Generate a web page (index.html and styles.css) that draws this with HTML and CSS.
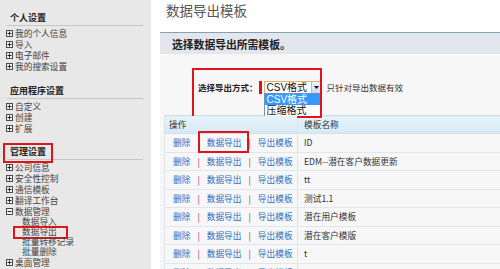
FILE: index.html
```html
<!DOCTYPE html>
<html lang="zh-CN">
<head>
<meta charset="utf-8">
<title>数据导出模板</title>
<link rel="stylesheet" href="styles.css">
</head>
<body>
<aside class="sidebar">
  <section class="nav-section">
    <h3 class="nav-title">个人设置</h3>
    <ul class="nav-list">
      <li class="nav-item"><svg class="ico" viewBox="0 0 7 7"><rect x=".5" y=".5" width="6" height="6" fill="#f4f4f4" stroke="#4a4a4a"/><path d="M1.5 3.5h4M3.5 1.5v4" stroke="#222"/></svg>我的个人信息</li>
      <li class="nav-item"><svg class="ico" viewBox="0 0 7 7"><rect x=".5" y=".5" width="6" height="6" fill="#f4f4f4" stroke="#4a4a4a"/><path d="M1.5 3.5h4M3.5 1.5v4" stroke="#222"/></svg>导入</li>
      <li class="nav-item"><svg class="ico" viewBox="0 0 7 7"><rect x=".5" y=".5" width="6" height="6" fill="#f4f4f4" stroke="#4a4a4a"/><path d="M1.5 3.5h4M3.5 1.5v4" stroke="#222"/></svg>电子邮件</li>
      <li class="nav-item"><svg class="ico" viewBox="0 0 7 7"><rect x=".5" y=".5" width="6" height="6" fill="#f4f4f4" stroke="#4a4a4a"/><path d="M1.5 3.5h4M3.5 1.5v4" stroke="#222"/></svg>我的搜索设置</li>
    </ul>
  </section>
  <section class="nav-section">
    <h3 class="nav-title">应用程序设置</h3>
    <ul class="nav-list">
      <li class="nav-item"><svg class="ico" viewBox="0 0 7 7"><rect x=".5" y=".5" width="6" height="6" fill="#f4f4f4" stroke="#4a4a4a"/><path d="M1.5 3.5h4M3.5 1.5v4" stroke="#222"/></svg>自定义</li>
      <li class="nav-item"><svg class="ico" viewBox="0 0 7 7"><rect x=".5" y=".5" width="6" height="6" fill="#f4f4f4" stroke="#4a4a4a"/><path d="M1.5 3.5h4M3.5 1.5v4" stroke="#222"/></svg>创建</li>
      <li class="nav-item"><svg class="ico" viewBox="0 0 7 7"><rect x=".5" y=".5" width="6" height="6" fill="#f4f4f4" stroke="#4a4a4a"/><path d="M1.5 3.5h4M3.5 1.5v4" stroke="#222"/></svg>扩展</li>
    </ul>
  </section>
  <section class="nav-section">
    <h3 class="nav-title">管理设置<span class="annot annot-admin"></span></h3>
    <ul class="nav-list">
      <li class="nav-item"><svg class="ico" viewBox="0 0 7 7"><rect x=".5" y=".5" width="6" height="6" fill="#f4f4f4" stroke="#4a4a4a"/><path d="M1.5 3.5h4M3.5 1.5v4" stroke="#222"/></svg>公司信息</li>
      <li class="nav-item"><svg class="ico" viewBox="0 0 7 7"><rect x=".5" y=".5" width="6" height="6" fill="#f4f4f4" stroke="#4a4a4a"/><path d="M1.5 3.5h4M3.5 1.5v4" stroke="#222"/></svg>安全性控制</li>
      <li class="nav-item"><svg class="ico" viewBox="0 0 7 7"><rect x=".5" y=".5" width="6" height="6" fill="#f4f4f4" stroke="#4a4a4a"/><path d="M1.5 3.5h4M3.5 1.5v4" stroke="#222"/></svg>通信模板</li>
      <li class="nav-item"><svg class="ico" viewBox="0 0 7 7"><rect x=".5" y=".5" width="6" height="6" fill="#f4f4f4" stroke="#4a4a4a"/><path d="M1.5 3.5h4M3.5 1.5v4" stroke="#222"/></svg>翻译工作台</li>
      <li class="nav-item"><svg class="ico" viewBox="0 0 7 7"><rect x=".5" y=".5" width="6" height="6" fill="#f4f4f4" stroke="#4a4a4a"/><path d="M1.5 3.5h4" stroke="#222"/></svg>数据管理</li>
      <li class="nav-item sub">数据导入</li>
      <li class="nav-item sub">数据导出<span class="annot annot-sub"></span></li>
      <li class="nav-item sub">批量转移记录</li>
      <li class="nav-item sub">批量删除</li>
      <li class="nav-item"><svg class="ico" viewBox="0 0 7 7"><rect x=".5" y=".5" width="6" height="6" fill="#f4f4f4" stroke="#4a4a4a"/><path d="M1.5 3.5h4M3.5 1.5v4" stroke="#222"/></svg>桌面管理</li>
    </ul>
  </section>
</aside>

<main class="main">
  <h1 class="page-title">数据导出模板</h1>
  <div class="panel">
    <div class="panel-head">选择数据导出所需模板。</div>
    <div class="panel-body">
      <div class="export-form">
        <span class="form-label">选择导出方式：</span>
        <span class="req-bar"></span>
        <div class="select">
          <span class="select-value">CSV格式</span>
          <span class="select-btn"><svg viewBox="0 0 5 3" width="5" height="3"><path d="M0 0h5L2.5 3z" fill="#111"/></svg></span>
          <ul class="select-list">
            <li class="opt opt-active">CSV格式</li>
            <li class="opt">压缩格式</li>
          </ul>
        </div>
        <span class="form-hint">只针对导出数据有效</span>
        <span class="annot annot-form"></span>
      </div>
      <table class="tpl-table">
        <thead>
          <tr><th class="col-ops">操作</th><th class="col-name">模板名称</th></tr>
        </thead>
        <tbody>
          <tr><td class="col-ops first"><a class="lnk">删除</a><span class="sep">|</span><a class="lnk">数据导出</a><span class="sep">|</span><a class="lnk">导出模板</a><span class="annot annot-row"></span></td><td class="col-name">ID</td></tr>
          <tr><td class="col-ops"><a class="lnk">删除</a><span class="sep">|</span><a class="lnk">数据导出</a><span class="sep">|</span><a class="lnk">导出模板</a></td><td class="col-name">EDM--潜在客户数据更新</td></tr>
          <tr><td class="col-ops"><a class="lnk">删除</a><span class="sep">|</span><a class="lnk">数据导出</a><span class="sep">|</span><a class="lnk">导出模板</a></td><td class="col-name">tt</td></tr>
          <tr><td class="col-ops"><a class="lnk">删除</a><span class="sep">|</span><a class="lnk">数据导出</a><span class="sep">|</span><a class="lnk">导出模板</a></td><td class="col-name">测试1.1</td></tr>
          <tr><td class="col-ops"><a class="lnk">删除</a><span class="sep">|</span><a class="lnk">数据导出</a><span class="sep">|</span><a class="lnk">导出模板</a></td><td class="col-name">潜在用户模板</td></tr>
          <tr><td class="col-ops"><a class="lnk">删除</a><span class="sep">|</span><a class="lnk">数据导出</a><span class="sep">|</span><a class="lnk">导出模板</a></td><td class="col-name">潜在客户模版</td></tr>
          <tr><td class="col-ops"><a class="lnk">删除</a><span class="sep">|</span><a class="lnk">数据导出</a><span class="sep">|</span><a class="lnk">导出模板</a></td><td class="col-name">t</td></tr>
          <tr><td class="col-ops"><a class="lnk">删除</a><span class="sep">|</span><a class="lnk">数据导出</a><span class="sep">|</span><a class="lnk">导出模板</a></td><td class="col-name">t</td></tr>
        </tbody>
      </table>
    </div>
  </div>
</main>
</body>
</html>
```

FILE: styles.css
```css
* { box-sizing: border-box; }

body {
  margin: 0;
  width: 500px;
  height: 269px;
  overflow: hidden;
  display: flex;
  background: #fff;
  font-family: "Noto Sans CJK SC", "Noto Sans", sans-serif;
  font-size: 8.7px;
  color: #333;
}

/* Sidebar */
.sidebar {
  flex: none;
  width: 151px;
  background: #e8e8e8;
  padding-top: 12px;
}
.nav-section + .nav-section { margin-top: 13px; }
.nav-section:last-child { margin-top: 12px; }

.nav-title {
  position: relative;
  margin: 0 8px 0 7px;
  padding: 0 0 1px 3px;
  font-size: 9px;
  line-height: 12px;
  font-weight: bold;
  color: #222;
  border-bottom: 1px solid #c6c6c6;
}
.nav-list {
  list-style: none;
  margin: 2px 0 0;
  padding: 0;
}
.nav-item {
  position: relative;
  display: flex;
  align-items: center;
  height: 11px;
  line-height: 11px;
  padding-left: 6px;
  color: #444;
  white-space: nowrap;
}
.nav-item.sub {
  height: 10px;
  line-height: 10px;
  padding-left: 22px;
}
.ico {
  flex: none;
  width: 7px;
  height: 7px;
  margin-right: 2px;
}

/* red annotation boxes */
.annot {
  position: absolute;
  border: 2px solid #e3131b;
  pointer-events: none;
}
.annot-admin { left: -4px; top: -3px; width: 50px; height: 20px; }
.annot-sub { left: 13px; top: -1px; width: 55px; height: 13px; }
.annot-form { left: 28px; top: -12px; width: 130px; height: 50px; }
.annot-row { left: 33px; top: -3px; width: 51px; height: 22px; }

/* Main */
.main {
  flex: 1;
  margin-left: 9px;
  display: flex;
  flex-direction: column;
  min-width: 0;
}
.page-title {
  margin: 2px 0 0 6px;
  font-size: 13.5px;
  line-height: 16px;
  font-weight: normal;
  color: #555;
}
.panel {
  flex: 1;
  margin-top: 14px;
  border-top: 1px solid #86a1b5;
  background: #f7f7f7;
}
.panel-head {
  height: 21px;
  display: flex;
  align-items: center;
  padding-left: 12px;
  background: #e3e6ec;
  font-size: 10.8px;
  font-weight: bold;
  color: #222;
}
.panel-body { padding-left: 4px; }

.export-form {
  position: relative;
  display: flex;
  align-items: center;
  height: 14px;
  margin-top: 26px;
  padding-left: 34px;
  white-space: nowrap;
}
.form-label {
  font-size: 8.5px;
  font-weight: bold;
  color: #222;
}
.req-bar {
  width: 3px;
  height: 13px;
  margin-left: 1px;
  background: #d9121b;
}
.select {
  position: relative;
  display: flex;
  width: 58px;
  height: 13px;
  margin-left: 2px;
  border: 1px solid #d9b27c;
  background: #fff;
}
.select-value {
  flex: 1;
  padding-left: 2px;
  font-family: "Liberation Sans", "Noto Sans CJK SC", sans-serif;
  font-size: 10px;
  line-height: 11px;
  color: #111;
}
.select-btn {
  width: 10px;
  display: flex;
  align-items: center;
  justify-content: center;
  background: linear-gradient(#eef4fb, #c9d9ec);
  border-left: 1px solid #a8bdd6;
}
.select-list {
  position: absolute;
  left: -1px;
  top: 11px;
  width: 58px;
  margin: 0;
  padding: 0;
  list-style: none;
  border: 1px solid #6f8fbf;
  background: #fff;
}
.opt {
  height: 11.5px;
  line-height: 11.5px;
  padding-left: 2px;
  font-family: "Liberation Sans", "Noto Sans CJK SC", sans-serif;
  font-size: 10px;
  color: #111;
}
.opt-active {
  background: #3399ff;
  color: #fff;
}
.form-hint {
  margin-left: 5px;
  font-size: 8.5px;
  color: #333;
}

/* Table */
.tpl-table {
  width: 336px;
  margin-top: 21px;
  border-collapse: collapse;
  border-left: 1px solid #dae4ea;
}
.tpl-table th {
  height: 18px;
  padding: 0;
  text-align: left;
  font-weight: normal;
  color: #333;
  background: linear-gradient(#e6f3fa, #d5eaf6);
  border-top: 1px solid #d3dde3;
  border-bottom: 1px solid #d3e0e8;
}
.tpl-table td {
  height: 18.5px;
  padding: 0;
  border-bottom: 1px solid #dde7ec;
  white-space: nowrap;
}
.col-ops {
  position: relative;
  width: 133px;
  padding-left: 8px !important;
  border-right: 1px solid #dae4ea;
}
th.col-ops { padding-left: 4px !important; }
.col-name {
  padding-left: 6px !important;
  color: #333;
}
.lnk {
  color: #2f6cc0;
  text-decoration: none;
}
.sep {
  display: inline-block;
  margin: 0 7px;
  color: #8a2c6c;
}
```
